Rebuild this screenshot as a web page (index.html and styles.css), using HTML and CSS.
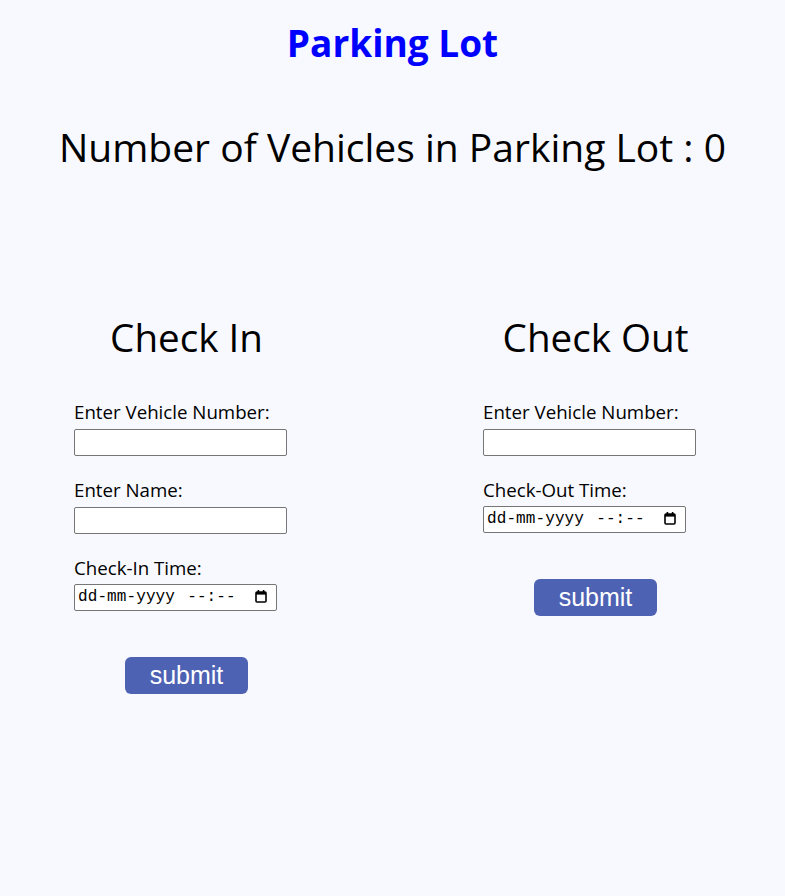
FILE: index.html
```html
<!DOCTYPE html>
<html lang="en">
<head>
<meta charset="utf-8">
<title>Parking Lot</title>
<link rel="stylesheet" href="styles.css">
</head>
<body>
  <h1 class="title">Parking Lot</h1>
  <h2 class="count">Number of Vehicles in Parking Lot : 0</h2>
  <div class="panels">
    <form class="panel">
      <h2 class="panel-title">Check In</h2>
      <label class="field-label">Enter Vehicle Number:</label>
      <input class="text-input" type="text">
      <label class="field-label">Enter Name:</label>
      <input class="text-input" type="text">
      <label class="field-label">Check-In Time:</label>
      <div class="datetime">
        <span class="datetime-text">dd-mm-yyyy --:--</span>
        <svg class="cal-icon" width="12" height="14" viewBox="0 0 12 14" aria-hidden="true">
          <rect x="1" y="3" width="10" height="10" rx="1" fill="none" stroke="#000" stroke-width="1.6"/>
          <rect x="1" y="3" width="10" height="2.6" fill="#000"/>
          <rect x="2.6" y="1" width="1.6" height="2.5" fill="#000"/>
          <rect x="7.8" y="1" width="1.6" height="2.5" fill="#000"/>
        </svg>
      </div>
      <button class="submit" type="button">submit</button>
    </form>
    <form class="panel">
      <h2 class="panel-title">Check Out</h2>
      <label class="field-label">Enter Vehicle Number:</label>
      <input class="text-input" type="text">
      <label class="field-label">Check-Out Time:</label>
      <div class="datetime">
        <span class="datetime-text">dd-mm-yyyy --:--</span>
        <svg class="cal-icon" width="12" height="14" viewBox="0 0 12 14" aria-hidden="true">
          <rect x="1" y="3" width="10" height="10" rx="1" fill="none" stroke="#000" stroke-width="1.6"/>
          <rect x="1" y="3" width="10" height="2.6" fill="#000"/>
          <rect x="2.6" y="1" width="1.6" height="2.5" fill="#000"/>
          <rect x="7.8" y="1" width="1.6" height="2.5" fill="#000"/>
        </svg>
      </div>
      <button class="submit" type="button">submit</button>
    </form>
  </div>
</body>
</html>
```
FILE: styles.css
```css
html, body {
  margin: 0;
  padding: 0;
}
body {
  background: #f8f9fe;
  font-family: "Open Sans", "Noto Sans", sans-serif;
  color: #000;
  width: 785px;
  height: 896px;
  overflow: hidden;
}
.title {
  margin: 20px 0 0;
  font-size: 37px;
  line-height: 45px;
  font-weight: 700;
  color: #0000ff;
  text-align: center;
}
.count {
  margin: 59px 0 0;
  font-size: 39px;
  line-height: 46px;
  font-weight: 400;
  text-align: center;
}
.panels {
  display: flex;
  gap: 184px;
  padding-left: 74px;
  margin-top: 144px;
}
.panel {
  width: 225px;
  display: flex;
  flex-direction: column;
  align-items: flex-start;
  margin: 0;
}
.panel-title {
  align-self: stretch;
  text-align: center;
  margin: 0 0 39px;
  font-size: 38.6px;
  line-height: 47px;
  font-weight: 400;
}
.field-label {
  display: block;
  font-size: 18.7px;
  line-height: 24px;
  margin-top: 22.5px;
}
.panel-title + .field-label {
  margin-top: 0;
}
.text-input {
  box-sizing: border-box;
  width: 213px;
  height: 27px;
  margin: 4.5px 0 0;
  border: 1px solid #767676;
  border-radius: 2px;
  background: #fff;
  padding: 1px 2px;
  font: 13px "Liberation Sans", Arial, sans-serif;
}
.datetime {
  box-sizing: border-box;
  width: 203px;
  height: 27px;
  margin-top: 3.5px;
  border: 1px solid #767676;
  border-radius: 2px;
  background: #fff;
  display: flex;
  align-items: center;
  justify-content: space-between;
  padding: 0 9px 0 3px;
}
.datetime-text {
  font-family: "Liberation Mono", "DejaVu Sans Mono", monospace;
  font-size: 16px;
  line-height: 25px;
  letter-spacing: 0.1px;
  word-spacing: 2.5px;
  white-space: pre;
  color: #000;
}
.cal-icon {
  display: block;
  margin-top: -2px;
}
.submit {
  align-self: center;
  margin-top: 46px;
  width: 123px;
  height: 37.5px;
  border: none;
  border-radius: 6px;
  background: #4e62b4;
  color: #fff;
  font-family: "Liberation Sans", Arial, sans-serif;
  font-size: 25px;
  line-height: 37px;
  padding: 0 0 2px;
  cursor: pointer;
}
```
